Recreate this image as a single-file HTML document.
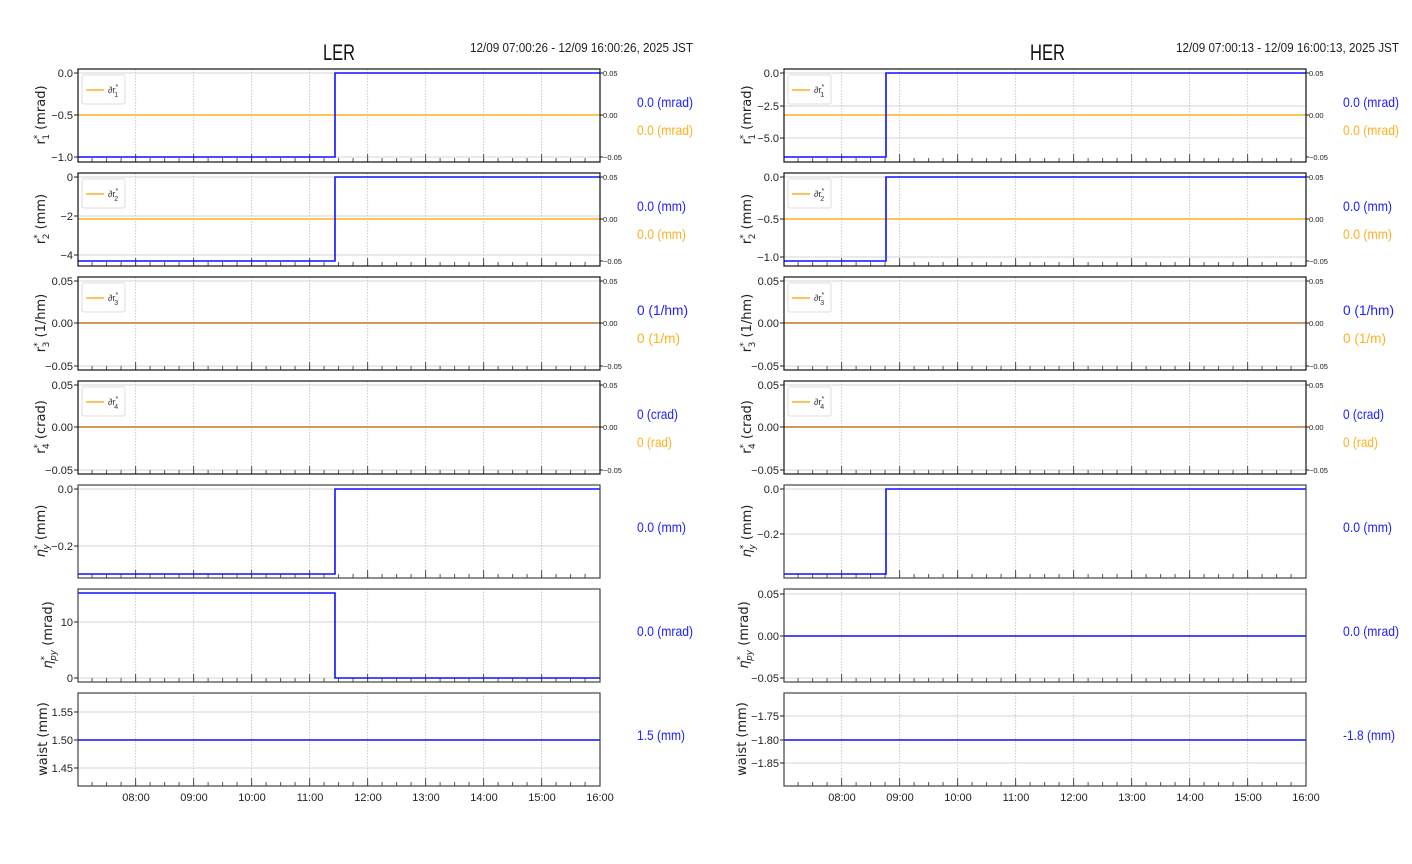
<!DOCTYPE html>
<html><head><meta charset="utf-8"><style>
html,body{margin:0;padding:0;background:#fff}
svg{display:block}
.t{font-family:"Liberation Sans Narrow","Liberation Sans",sans-serif;font-size:11px;fill:#222}
.r{font-family:"Liberation Sans Narrow","Liberation Sans",sans-serif;font-size:7.5px;fill:#222}
.v{font-family:"Liberation Sans Narrow","Liberation Sans",sans-serif;font-size:14px}
.yl{font-family:"DejaVu Sans","Liberation Sans",sans-serif;font-size:13px;fill:#222}
.lg{font-family:"Liberation Sans Narrow","Liberation Sans",sans-serif;font-size:9px;fill:#333}
.hg{stroke:#d6d6d6;stroke-width:1}
.b{stroke:#1010ff;stroke-width:1.6;fill:none}
.o{stroke:#ffb020;stroke-width:1.6;fill:none}
.br{stroke:#c98a4a;stroke-width:1.8;fill:none}
.fr{fill:none;stroke:#111;stroke-width:1.2}
.fr2{fill:none;stroke:#444;stroke-width:1.2}
</style></head><body>
<svg width="1412" height="864" viewBox="0 0 1412 864" xmlns="http://www.w3.org/2000/svg">
<defs>
<g id="grid">
<path d="M135.6 0v93m58-93v93m58-93v93m58-93v93m58-93v93m58-93v93m58-93v93m58-93v93" stroke="#c8c8c8" stroke-width="1" stroke-dasharray="1.5,1.5"/>
<path d="M92.1 93v-4m14.5 4v-4m14.5 4v-4m14.5 4v-4m14.5 4v-4m14.5 4v-4m14.5 4v-4m14.5 4v-4m14.5 4v-4m14.5 4v-4m14.5 4v-4m14.5 4v-4m14.5 4v-4m14.5 4v-4m14.5 4v-4m14.5 4v-4m14.5 4v-4m14.5 4v-4m14.5 4v-4m14.5 4v-4m14.5 4v-4m14.5 4v-4m14.5 4v-4m14.5 4v-4m14.5 4v-4m14.5 4v-4m14.5 4v-4m14.5 4v-4m14.5 4v-4m14.5 4v-4m14.5 4v-4m14.5 4v-4m14.5 4v-4m14.5 4v-4m14.5 4v-4" stroke="#555" stroke-width="1"/>
<path d="M135.6 93v-8m58 8v-8m58 8v-8m58 8v-8m58 8v-8m58 8v-8m58 8v-8m58 8v-8" stroke="#555" stroke-width="1"/>
</g>
<g id="leg"><rect x="82" y="6" width="43" height="29" rx="2" fill="#fff" stroke="#ddd"/><path d="M86 21h18" stroke="#ffb020" stroke-width="1.6"/></g>
</defs>

<text x="323" y="60" textLength="32" lengthAdjust="spacingAndGlyphs" style="font-family:'Liberation Sans Narrow','Liberation Sans',sans-serif;font-size:22px" fill="#111">LER</text>
<text x="470" y="52" textLength="223" lengthAdjust="spacingAndGlyphs" class="t" style="font-size:13px">12/09 07:00:26 - 12/09 16:00:26, 2025 JST</text>
<text x="1030" y="60" textLength="35" lengthAdjust="spacingAndGlyphs" style="font-family:'Liberation Sans Narrow','Liberation Sans',sans-serif;font-size:22px" fill="#111">HER</text>
<text x="1176" y="52" textLength="223" lengthAdjust="spacingAndGlyphs" class="t" style="font-size:13px">12/09 07:00:13 - 12/09 16:00:13, 2025 JST</text>

<!-- ===== LEFT ===== -->
<g transform="translate(0,69)">
<path class="hg" d="M78 4H600M78 46H600M78 88H600"/><use href="#grid"/>
<path class="o" d="M78 46H600"/><path class="b" d="M78 88H335V4H600"/>
<use href="#leg"/><text x="108" y="24" class="lg">∂r<tspan font-size="7" dy="-4">*</tspan><tspan font-size="7" dx="-4" dy="8">1</tspan></text>
<rect class="fr" x="78" y="0" width="522" height="93"/>
<path d="M74 4h4M74 46h4M74 88h4M600 4h3M600 46h3M600 88h3" stroke="#222"/>
<text class="t" x="73" y="8" text-anchor="end">0.0</text><text class="t" x="73" y="50" text-anchor="end">−0.5</text><text class="t" x="73" y="92" text-anchor="end">−1.0</text>
<text class="r" x="603" y="7">0.05</text><text class="r" x="603" y="49">0.00</text><text class="r" x="603" y="91">−0.05</text>
<text class="v" x="637" y="38" fill="#2020ff" textLength="56" lengthAdjust="spacingAndGlyphs">0.0 (mrad)</text><text class="v" x="637" y="66" fill="#ffb020" textLength="56" lengthAdjust="spacingAndGlyphs">0.0 (mrad)</text>
<text class="yl" transform="translate(45,46) rotate(-90)" text-anchor="middle">r<tspan font-size="9" dy="-5">*</tspan><tspan font-size="9" dx="-5" dy="9">1</tspan><tspan dy="-4"> (mrad)</tspan></text>
</g>

<g transform="translate(0,173)">
<path class="hg" d="M78 4H600M78 43H600M78 82H600"/><use href="#grid"/>
<path class="o" d="M78 46H600"/><path class="b" d="M78 88H335V4H600"/>
<use href="#leg"/><text x="108" y="24" class="lg">∂r<tspan font-size="7" dy="-4">*</tspan><tspan font-size="7" dx="-4" dy="8">2</tspan></text>
<rect class="fr" x="78" y="0" width="522" height="93"/>
<path d="M74 4h4M74 43h4M74 82h4M600 4h3M600 46h3M600 88h3" stroke="#222"/>
<text class="t" x="73" y="8" text-anchor="end">0</text><text class="t" x="73" y="47" text-anchor="end">−2</text><text class="t" x="73" y="86" text-anchor="end">−4</text>
<text class="r" x="603" y="7">0.05</text><text class="r" x="603" y="49">0.00</text><text class="r" x="603" y="91">−0.05</text>
<text class="v" x="637" y="38" fill="#2020ff" textLength="49" lengthAdjust="spacingAndGlyphs">0.0 (mm)</text><text class="v" x="637" y="66" fill="#ffb020" textLength="49" lengthAdjust="spacingAndGlyphs">0.0 (mm)</text>
<text class="yl" transform="translate(45,46) rotate(-90)" text-anchor="middle">r<tspan font-size="9" dy="-5">*</tspan><tspan font-size="9" dx="-5" dy="9">2</tspan><tspan dy="-4"> (mm)</tspan></text>
</g>

<g transform="translate(0,277)">
<path class="hg" d="M78 4H600M78 89H600"/><use href="#grid"/>
<path class="br" d="M78 46H600"/>
<use href="#leg"/><text x="108" y="24" class="lg">∂r<tspan font-size="7" dy="-4">*</tspan><tspan font-size="7" dx="-4" dy="8">3</tspan></text>
<rect class="fr" x="78" y="0" width="522" height="93"/>
<path d="M74 4h4M74 46h4M74 89h4M600 4h3M600 46h3M600 89h3" stroke="#222"/>
<text class="t" x="73" y="8" text-anchor="end">0.05</text><text class="t" x="73" y="50" text-anchor="end">0.00</text><text class="t" x="73" y="93" text-anchor="end">−0.05</text>
<text class="r" x="603" y="7">0.05</text><text class="r" x="603" y="49">0.00</text><text class="r" x="603" y="92">−0.05</text>
<text class="v" x="637" y="38" fill="#2020ff" textLength="51" lengthAdjust="spacingAndGlyphs">0 (1/hm)</text><text class="v" x="637" y="66" fill="#ffb020" textLength="43" lengthAdjust="spacingAndGlyphs">0 (1/m)</text>
<text class="yl" transform="translate(45,46) rotate(-90)" text-anchor="middle">r<tspan font-size="9" dy="-5">*</tspan><tspan font-size="9" dx="-5" dy="9">3</tspan><tspan dy="-4"> (1/hm)</tspan></text>
</g>

<g transform="translate(0,381)">
<path class="hg" d="M78 4H600M78 89H600"/><use href="#grid"/>
<path class="br" d="M78 46H600"/>
<use href="#leg"/><text x="108" y="24" class="lg">∂r<tspan font-size="7" dy="-4">*</tspan><tspan font-size="7" dx="-4" dy="8">4</tspan></text>
<rect class="fr" x="78" y="0" width="522" height="93"/>
<path d="M74 4h4M74 46h4M74 89h4M600 4h3M600 46h3M600 89h3" stroke="#222"/>
<text class="t" x="73" y="8" text-anchor="end">0.05</text><text class="t" x="73" y="50" text-anchor="end">0.00</text><text class="t" x="73" y="93" text-anchor="end">−0.05</text>
<text class="r" x="603" y="7">0.05</text><text class="r" x="603" y="49">0.00</text><text class="r" x="603" y="92">−0.05</text>
<text class="v" x="637" y="38" fill="#2020ff" textLength="41" lengthAdjust="spacingAndGlyphs">0 (crad)</text><text class="v" x="637" y="66" fill="#ffb020" textLength="35" lengthAdjust="spacingAndGlyphs">0 (rad)</text>
<text class="yl" transform="translate(45,46) rotate(-90)" text-anchor="middle">r<tspan font-size="9" dy="-5">*</tspan><tspan font-size="9" dx="-5" dy="9">4</tspan><tspan dy="-4"> (crad)</tspan></text>
</g>

<g transform="translate(0,485)">
<path class="hg" d="M78 4H600M78 61H600"/><use href="#grid"/>
<path class="b" d="M78 89H335V4H600"/>
<rect class="fr2" x="78" y="0" width="522" height="93"/>
<path d="M74 4h4M74 61h4" stroke="#222"/>
<text class="t" x="73" y="8" text-anchor="end">0.0</text><text class="t" x="73" y="65" text-anchor="end">−0.2</text>
<text class="v" x="637" y="47" fill="#2020ff" textLength="49" lengthAdjust="spacingAndGlyphs">0.0 (mm)</text>
<text class="yl" transform="translate(45,46) rotate(-90)" text-anchor="middle"><tspan font-style="italic">η</tspan><tspan font-size="9" dy="-5">*</tspan><tspan font-size="9" dx="-5" dy="9" font-style="italic">y</tspan><tspan dy="-4"> (mm)</tspan></text>
</g>

<g transform="translate(0,589)">
<path class="hg" d="M78 33H600M78 89H600"/><use href="#grid"/>
<path class="b" d="M78 4H335V89H600"/>
<rect class="fr2" x="78" y="0" width="522" height="93"/>
<path d="M74 33h4M74 89h4" stroke="#222"/>
<text class="t" x="73" y="37" text-anchor="end">10</text><text class="t" x="73" y="93" text-anchor="end">0</text>
<text class="v" x="637" y="47" fill="#2020ff" textLength="56" lengthAdjust="spacingAndGlyphs">0.0 (mrad)</text>
<text class="yl" transform="translate(52,46) rotate(-90)" text-anchor="middle"><tspan font-style="italic">η</tspan><tspan font-size="9" dy="-5">*</tspan><tspan font-size="9" dx="-5" dy="9" font-style="italic">py</tspan><tspan dy="-4"> (mrad)</tspan></text>
</g>

<g transform="translate(0,693)">
<path class="hg" d="M78 19H600M78 47H600M78 75H600"/><use href="#grid"/>
<path class="b" d="M78 47H600"/>
<rect class="fr2" x="78" y="0" width="522" height="93"/>
<path d="M74 19h4M74 47h4M74 75h4" stroke="#222"/>
<text class="t" x="73" y="23" text-anchor="end">1.55</text><text class="t" x="73" y="51" text-anchor="end">1.50</text><text class="t" x="73" y="79" text-anchor="end">1.45</text>
<text class="v" x="637" y="47" fill="#2020ff" textLength="48" lengthAdjust="spacingAndGlyphs">1.5 (mm)</text>
<text class="yl" transform="translate(47,46) rotate(-90)" text-anchor="middle">waist (mm)</text>
<text class="t" y="108" text-anchor="middle"><tspan x="136">08:00</tspan><tspan x="194">09:00</tspan><tspan x="252">10:00</tspan><tspan x="310">11:00</tspan><tspan x="368">12:00</tspan><tspan x="426">13:00</tspan><tspan x="484">14:00</tspan><tspan x="542">15:00</tspan><tspan x="600">16:00</tspan></text>
</g>

<!-- ===== RIGHT ===== -->
<g transform="translate(706,69)">
<path class="hg" d="M78 4H600M78 37H600M78 69H600"/><use href="#grid"/>
<path class="o" d="M78 46H600"/><path class="b" d="M78 88H180V4H600"/>
<use href="#leg"/><text x="108" y="24" class="lg">∂r<tspan font-size="7" dy="-4">*</tspan><tspan font-size="7" dx="-4" dy="8">1</tspan></text>
<rect class="fr" x="78" y="0" width="522" height="93"/>
<path d="M74 4h4M74 37h4M74 69h4M600 4h3M600 46h3M600 88h3" stroke="#222"/>
<text class="t" x="73" y="8" text-anchor="end">0.0</text><text class="t" x="73" y="41" text-anchor="end">−2.5</text><text class="t" x="73" y="73" text-anchor="end">−5.0</text>
<text class="r" x="603" y="7">0.05</text><text class="r" x="603" y="49">0.00</text><text class="r" x="603" y="91">−0.05</text>
<text class="v" x="637" y="38" fill="#2020ff" textLength="56" lengthAdjust="spacingAndGlyphs">0.0 (mrad)</text><text class="v" x="637" y="66" fill="#ffb020" textLength="56" lengthAdjust="spacingAndGlyphs">0.0 (mrad)</text>
<text class="yl" transform="translate(45,46) rotate(-90)" text-anchor="middle">r<tspan font-size="9" dy="-5">*</tspan><tspan font-size="9" dx="-5" dy="9">1</tspan><tspan dy="-4"> (mrad)</tspan></text>
</g>

<g transform="translate(706,173)">
<path class="hg" d="M78 4H600M78 46H600M78 84H600"/><use href="#grid"/>
<path class="o" d="M78 46H600"/><path class="b" d="M78 88H180V4H600"/>
<use href="#leg"/><text x="108" y="24" class="lg">∂r<tspan font-size="7" dy="-4">*</tspan><tspan font-size="7" dx="-4" dy="8">2</tspan></text>
<rect class="fr" x="78" y="0" width="522" height="93"/>
<path d="M74 4h4M74 46h4M74 84h4M600 4h3M600 46h3M600 88h3" stroke="#222"/>
<text class="t" x="73" y="8" text-anchor="end">0.0</text><text class="t" x="73" y="50" text-anchor="end">−0.5</text><text class="t" x="73" y="88" text-anchor="end">−1.0</text>
<text class="r" x="603" y="7">0.05</text><text class="r" x="603" y="49">0.00</text><text class="r" x="603" y="91">−0.05</text>
<text class="v" x="637" y="38" fill="#2020ff" textLength="49" lengthAdjust="spacingAndGlyphs">0.0 (mm)</text><text class="v" x="637" y="66" fill="#ffb020" textLength="49" lengthAdjust="spacingAndGlyphs">0.0 (mm)</text>
<text class="yl" transform="translate(45,46) rotate(-90)" text-anchor="middle">r<tspan font-size="9" dy="-5">*</tspan><tspan font-size="9" dx="-5" dy="9">2</tspan><tspan dy="-4"> (mm)</tspan></text>
</g>

<g transform="translate(706,277)">
<path class="hg" d="M78 4H600M78 89H600"/><use href="#grid"/>
<path class="br" d="M78 46H600"/>
<use href="#leg"/><text x="108" y="24" class="lg">∂r<tspan font-size="7" dy="-4">*</tspan><tspan font-size="7" dx="-4" dy="8">3</tspan></text>
<rect class="fr" x="78" y="0" width="522" height="93"/>
<path d="M74 4h4M74 46h4M74 89h4M600 4h3M600 46h3M600 89h3" stroke="#222"/>
<text class="t" x="73" y="8" text-anchor="end">0.05</text><text class="t" x="73" y="50" text-anchor="end">0.00</text><text class="t" x="73" y="93" text-anchor="end">−0.05</text>
<text class="r" x="603" y="7">0.05</text><text class="r" x="603" y="49">0.00</text><text class="r" x="603" y="92">−0.05</text>
<text class="v" x="637" y="38" fill="#2020ff" textLength="51" lengthAdjust="spacingAndGlyphs">0 (1/hm)</text><text class="v" x="637" y="66" fill="#ffb020" textLength="43" lengthAdjust="spacingAndGlyphs">0 (1/m)</text>
<text class="yl" transform="translate(45,46) rotate(-90)" text-anchor="middle">r<tspan font-size="9" dy="-5">*</tspan><tspan font-size="9" dx="-5" dy="9">3</tspan><tspan dy="-4"> (1/hm)</tspan></text>
</g>

<g transform="translate(706,381)">
<path class="hg" d="M78 4H600M78 89H600"/><use href="#grid"/>
<path class="br" d="M78 46H600"/>
<use href="#leg"/><text x="108" y="24" class="lg">∂r<tspan font-size="7" dy="-4">*</tspan><tspan font-size="7" dx="-4" dy="8">4</tspan></text>
<rect class="fr" x="78" y="0" width="522" height="93"/>
<path d="M74 4h4M74 46h4M74 89h4M600 4h3M600 46h3M600 89h3" stroke="#222"/>
<text class="t" x="73" y="8" text-anchor="end">0.05</text><text class="t" x="73" y="50" text-anchor="end">0.00</text><text class="t" x="73" y="93" text-anchor="end">−0.05</text>
<text class="r" x="603" y="7">0.05</text><text class="r" x="603" y="49">0.00</text><text class="r" x="603" y="92">−0.05</text>
<text class="v" x="637" y="38" fill="#2020ff" textLength="41" lengthAdjust="spacingAndGlyphs">0 (crad)</text><text class="v" x="637" y="66" fill="#ffb020" textLength="35" lengthAdjust="spacingAndGlyphs">0 (rad)</text>
<text class="yl" transform="translate(45,46) rotate(-90)" text-anchor="middle">r<tspan font-size="9" dy="-5">*</tspan><tspan font-size="9" dx="-5" dy="9">4</tspan><tspan dy="-4"> (crad)</tspan></text>
</g>

<g transform="translate(706,485)">
<path class="hg" d="M78 4H600M78 49H600"/><use href="#grid"/>
<path class="b" d="M78 89H180V4H600"/>
<rect class="fr2" x="78" y="0" width="522" height="93"/>
<path d="M74 4h4M74 49h4" stroke="#222"/>
<text class="t" x="73" y="8" text-anchor="end">0.0</text><text class="t" x="73" y="53" text-anchor="end">−0.2</text>
<text class="v" x="637" y="47" fill="#2020ff" textLength="49" lengthAdjust="spacingAndGlyphs">0.0 (mm)</text>
<text class="yl" transform="translate(45,46) rotate(-90)" text-anchor="middle"><tspan font-style="italic">η</tspan><tspan font-size="9" dy="-5">*</tspan><tspan font-size="9" dx="-5" dy="9" font-style="italic">y</tspan><tspan dy="-4"> (mm)</tspan></text>
</g>

<g transform="translate(706,589)">
<path class="hg" d="M78 5H600M78 47H600M78 89H600"/><use href="#grid"/>
<path class="b" d="M78 47H600"/>
<rect class="fr2" x="78" y="0" width="522" height="93"/>
<path d="M74 5h4M74 47h4M74 89h4" stroke="#222"/>
<text class="t" x="73" y="9" text-anchor="end">0.05</text><text class="t" x="73" y="51" text-anchor="end">0.00</text><text class="t" x="73" y="93" text-anchor="end">−0.05</text>
<text class="v" x="637" y="47" fill="#2020ff" textLength="56" lengthAdjust="spacingAndGlyphs">0.0 (mrad)</text>
<text class="yl" transform="translate(42,46) rotate(-90)" text-anchor="middle"><tspan font-style="italic">η</tspan><tspan font-size="9" dy="-5">*</tspan><tspan font-size="9" dx="-5" dy="9" font-style="italic">py</tspan><tspan dy="-4"> (mrad)</tspan></text>
</g>

<g transform="translate(706,693)">
<path class="hg" d="M78 23H600M78 47H600M78 70H600"/><use href="#grid"/>
<path class="b" d="M78 47H600"/>
<rect class="fr2" x="78" y="0" width="522" height="93"/>
<path d="M74 23h4M74 47h4M74 70h4" stroke="#222"/>
<text class="t" x="73" y="27" text-anchor="end">−1.75</text><text class="t" x="73" y="51" text-anchor="end">−1.80</text><text class="t" x="73" y="74" text-anchor="end">−1.85</text>
<text class="v" x="637" y="47" fill="#2020ff" textLength="52" lengthAdjust="spacingAndGlyphs">-1.8 (mm)</text>
<text class="yl" transform="translate(40,46) rotate(-90)" text-anchor="middle">waist (mm)</text>
<text class="t" y="108" text-anchor="middle"><tspan x="136">08:00</tspan><tspan x="194">09:00</tspan><tspan x="252">10:00</tspan><tspan x="310">11:00</tspan><tspan x="368">12:00</tspan><tspan x="426">13:00</tspan><tspan x="484">14:00</tspan><tspan x="542">15:00</tspan><tspan x="600">16:00</tspan></text>
</g>
</svg>
</body></html>
